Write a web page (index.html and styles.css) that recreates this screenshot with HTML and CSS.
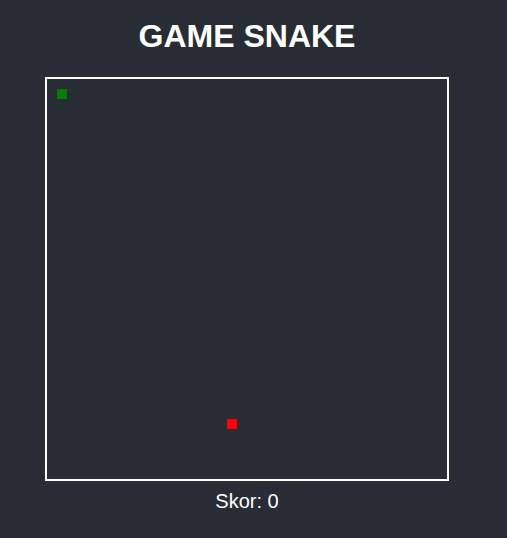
FILE: index.html
```html
<!DOCTYPE html>
<html lang="id">
<head>
<meta charset="utf-8">
<title>Game Snake</title>
<link rel="stylesheet" href="styles.css">
</head>
<body>
<main class="app">
  <h1 class="title">GAME SNAKE</h1>
  <div class="board">
    <div class="cell snake" style="left:10px;top:10px"></div>
    <div class="cell food" style="left:180px;top:340px"></div>
  </div>
  <p class="score">Skor: 0</p>
</main>
</body>
</html>
```
FILE: styles.css
```css
html, body {
  margin: 0;
  padding: 0;
  background: #282c34;
  color: #ffffff;
  font-family: "Liberation Sans", Arial, sans-serif;
}
.app {
  width: 494px;
  display: flex;
  flex-direction: column;
  align-items: center;
}
.title {
  margin: 18px 0 22px;
  font-size: 32px;
  font-weight: bold;
  line-height: normal;
}
.board {
  position: relative;
  width: 400px;
  height: 400px;
  border: 2px solid #ffffff;
}
.cell {
  position: absolute;
  width: 10px;
  height: 10px;
}
.snake { background: #008000; }
.food { background: #ff0000; }
.score {
  margin: 9px 0 0;
  font-size: 20px;
  line-height: normal;
}
```
